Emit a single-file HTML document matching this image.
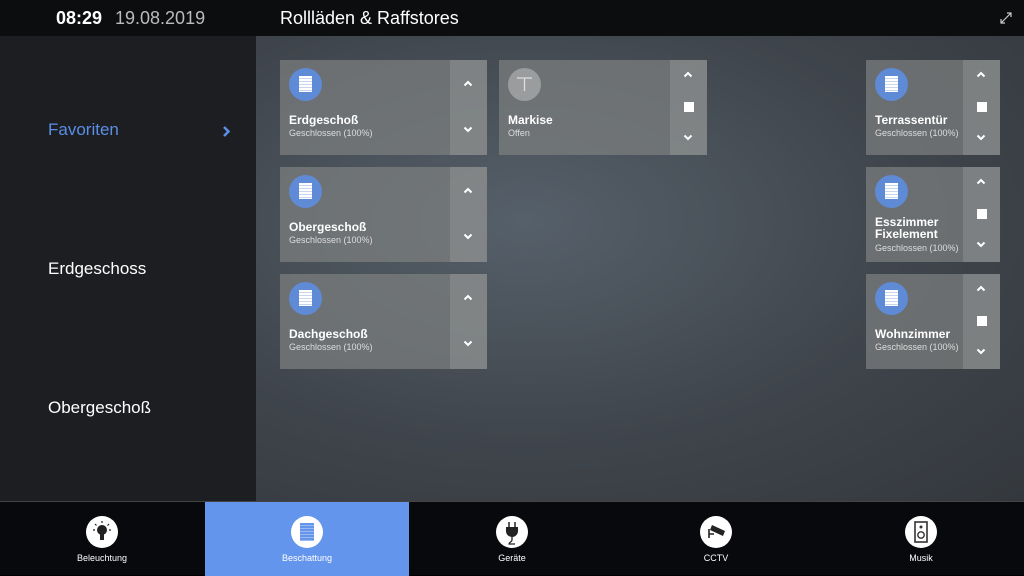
<!DOCTYPE html><html><head><meta charset="utf-8"><style>
*{margin:0;padding:0;box-sizing:border-box}
body{width:1024px;height:575px;overflow:hidden;font-family:"Liberation Sans",sans-serif;background:#000;position:relative;color:#fff}
.hdr{position:absolute;left:0;top:0;width:1024px;height:36px;background:#0c0d0f}
.side{position:absolute;left:0;top:36px;width:256px;height:465px;background:#1d1e21}
.main{position:absolute;left:256px;top:36px;width:768px;height:465px;background:radial-gradient(ellipse at 35% 40%,#56606a 0%,#3f454c 55%,#34383d 100%)}
.nav{position:absolute;left:0;top:501px;width:1024px;height:74px;background:#07090c;border-top:1px solid #444}
.t{position:absolute;background:rgba(125,127,128,.72)}
.c{position:absolute;top:0;right:0;width:37px;height:100%;background:rgba(160,162,164,.35)}
.ic{position:absolute;left:9px;top:8px;width:33px;height:33px;border-radius:50%;background:#5f8ad6}
.ic.b:after{content:"";position:absolute;left:10px;top:8px;width:13px;height:16px;background:repeating-linear-gradient(#fff 0 2px,#c9d6f0 2px 3px)}
.n{position:absolute;left:9px;font-size:12px;font-weight:bold}
.s{position:absolute;left:9px;font-size:9px;color:#ddd}
.ch{position:absolute;left:13px;width:10px;height:7px}
.sq{position:absolute;left:14px;width:10px;height:10px;background:#fff}
.ni{position:absolute;top:14px;width:32px;height:32px;border-radius:50%;background:#fff;margin-left:-16px}
.ni svg{position:absolute;left:0;top:0}
.nl{position:absolute;top:51px;font-size:9px;width:120px;margin-left:-60px;text-align:center}
</style></head><body>
<svg width="0" height="0" style="position:absolute"><defs>
<symbol id="up" viewBox="0 0 10 7"><polyline points="1.5,5.5 5,2 8.5,5.5" fill="none" stroke="#fff" stroke-width="2"/></symbol>
<symbol id="dn" viewBox="0 0 10 7"><polyline points="1.5,1.5 5,5 8.5,1.5" fill="none" stroke="#fff" stroke-width="2"/></symbol>
</defs></svg>
<div class="hdr">
<div style="position:absolute;left:56px;top:8px;font-size:18px;font-weight:bold">08:29</div>
<div style="position:absolute;left:115px;top:8px;font-size:18px;color:#bbb">19.08.2019</div>
<div style="position:absolute;left:280px;top:8px;font-size:18px">Rollläden &amp; Raffstores</div>
<svg style="position:absolute;left:1000px;top:12px" width="12" height="12" viewBox="0 0 12 12"><path d="M1 11L11 1M7 1h4v4M1 7v4h4" fill="none" stroke="#ccc" stroke-width="1.2"/></svg>
</div>
<div class="side">
<div style="position:absolute;left:48px;top:84px;font-size:17px;color:#5b8ee6">Favoriten</div>
<svg style="position:absolute;left:222px;top:89px" width="9" height="13" viewBox="0 0 9 13"><polyline points="2,2 6.5,6.5 2,11" fill="none" stroke="#5b8ee6" stroke-width="2.5"/></svg>
<div style="position:absolute;left:48px;top:223px;font-size:17px">Erdgeschoss</div>
<div style="position:absolute;left:48px;top:362px;font-size:17px">Obergeschoß</div>
</div>
<div class="main"></div>

<div class="t" style="left:280px;top:60px;width:207px;height:95px"><div class="ic b"></div><div class="n" style="top:53px">Erdgeschoß</div><div class="s" style="top:68px">Geschlossen (100%)</div><div class="c"><svg class="ch" style="top:20px"><use href="#up"/></svg><svg class="ch" style="top:66px"><use href="#dn"/></svg></div></div>
<div class="t" style="left:499px;top:60px;width:208px;height:95px"><div class="ic" style="background:#9a9c9e"><svg width="33" height="33"><path d="M9 10h15M16.5 10v13" stroke="#ddd" stroke-width="1.3" fill="none"/></svg></div><div class="n" style="top:53px">Markise</div><div class="s" style="top:68px">Offen</div><div class="c"><svg class="ch" style="top:11px"><use href="#up"/></svg><div class="sq" style="top:42px"></div><svg class="ch" style="top:74px"><use href="#dn"/></svg></div></div>
<div class="t" style="left:280px;top:167px;width:207px;height:95px"><div class="ic b"></div><div class="n" style="top:53px">Obergeschoß</div><div class="s" style="top:68px">Geschlossen (100%)</div><div class="c"><svg class="ch" style="top:20px"><use href="#up"/></svg><svg class="ch" style="top:66px"><use href="#dn"/></svg></div></div>
<div class="t" style="left:280px;top:274px;width:207px;height:95px"><div class="ic b"></div><div class="n" style="top:53px">Dachgeschoß</div><div class="s" style="top:68px">Geschlossen (100%)</div><div class="c"><svg class="ch" style="top:20px"><use href="#up"/></svg><svg class="ch" style="top:66px"><use href="#dn"/></svg></div></div>
<div class="t" style="left:866px;top:60px;width:134px;height:95px"><div class="ic b"></div><div class="n" style="top:53px">Terrassentür</div><div class="s" style="top:68px">Geschlossen (100%)</div><div class="c"><svg class="ch" style="top:11px"><use href="#up"/></svg><div class="sq" style="top:42px"></div><svg class="ch" style="top:74px"><use href="#dn"/></svg></div></div>
<div class="t" style="left:866px;top:167px;width:134px;height:95px"><div class="ic b"></div><div class="n" style="top:49px;line-height:12px">Esszimmer<br>Fixelement</div><div class="s" style="top:76px">Geschlossen (100%)</div><div class="c"><svg class="ch" style="top:11px"><use href="#up"/></svg><div class="sq" style="top:42px"></div><svg class="ch" style="top:74px"><use href="#dn"/></svg></div></div>
<div class="t" style="left:866px;top:274px;width:134px;height:95px"><div class="ic b"></div><div class="n" style="top:53px">Wohnzimmer</div><div class="s" style="top:68px">Geschlossen (100%)</div><div class="c"><svg class="ch" style="top:11px"><use href="#up"/></svg><div class="sq" style="top:42px"></div><svg class="ch" style="top:74px"><use href="#dn"/></svg></div></div>

<div class="nav">
<div style="position:absolute;left:205px;top:0;width:204px;height:74px;background:#6495ed"></div>
<div class="ni" style="left:102px"><svg width="32" height="32"><circle cx="16" cy="14" r="5" fill="#222"/><rect x="14" y="18" width="4" height="6" fill="#222"/><path d="M16 5v2M9 8l1.5 1.5M23 8l-1.5 1.5M7 14h2M23 14h2" stroke="#222" stroke-width="1.2"/></svg></div><div class="nl" style="left:102px">Beleuchtung</div>
<div class="ni" style="left:307px"><div style="position:absolute;left:9px;top:7px;width:14px;height:18px;background:repeating-linear-gradient(#6495ed 0 2px,#9bb8f0 2px 3px)"></div></div><div class="nl" style="left:307px">Beschattung</div>
<div class="ni" style="left:512px"><svg width="32" height="32"><path d="M13 6v5M19 6v5" stroke="#222" stroke-width="1.5"/><path d="M10 11h12v4a6 6 0 0 1-12 0z" fill="#222"/><path d="M16 20v4c0 2-3 2-3 4h6" stroke="#222" stroke-width="1.3" fill="none"/></svg></div><div class="nl" style="left:512px">Geräte</div>
<div class="ni" style="left:716px"><svg width="32" height="32"><path d="M12 9l13 6-2 5-13-6z" fill="#222"/><path d="M9 13v9M9 18h5" stroke="#222" stroke-width="1.6"/></svg></div><div class="nl" style="left:716px">CCTV</div>
<div class="ni" style="left:921px"><svg width="32" height="32"><rect x="10" y="6" width="12" height="20" fill="none" stroke="#333" stroke-width="1.6"/><circle cx="16" cy="11" r="1.5" fill="#333"/><circle cx="16" cy="19" r="3.2" fill="none" stroke="#333" stroke-width="1.4"/></svg></div><div class="nl" style="left:921px">Musik</div>
</div>
</body></html>
